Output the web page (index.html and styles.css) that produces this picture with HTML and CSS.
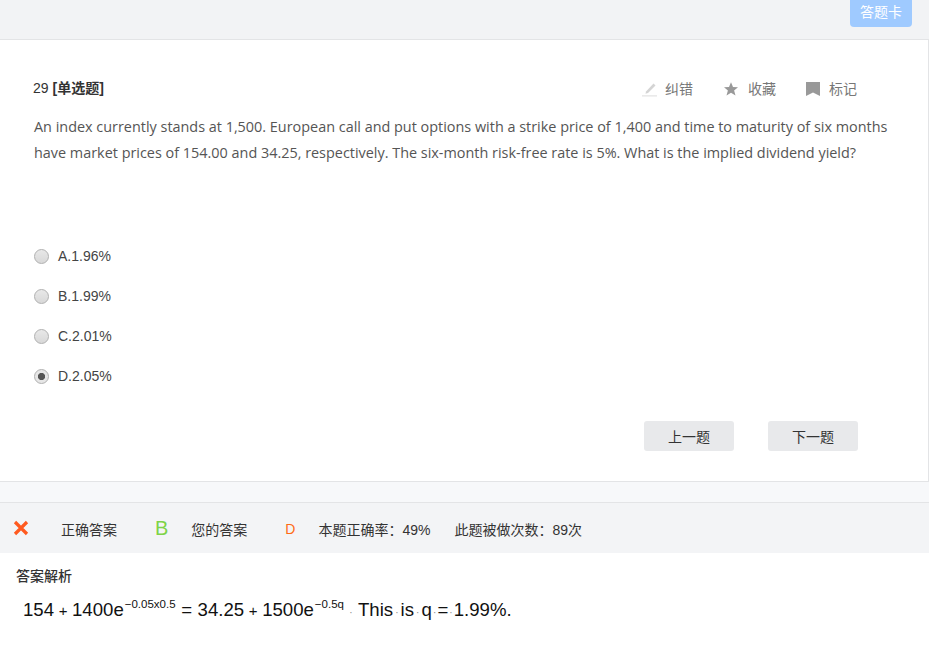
FILE: index.html
```html
<!DOCTYPE html>
<html lang="zh">
<head>
<meta charset="utf-8">
<title>答题</title>
<link rel="stylesheet" href="styles.css">
</head>
<body>
<div class="page">
  <header class="topbar">
    <button class="card-btn">答题卡</button>
  </header>
  <main class="question">
    <div class="q-head">
      <div class="q-title">29 <b>[单选题]</b></div>
      <div class="q-tools">
        <span class="tool">
          <svg class="ico" width="16" height="16" viewBox="0 0 16 16"><path d="M4 10.5 11.5 2.5 13.5 4.5 6 12 3.5 12.8Z" fill="#d4d4d4"/><rect x="0" y="14.4" width="15" height="1" fill="#dcdcdc"/></svg>
          纠错
        </span>
        <span class="tool tool-star">
          <svg class="ico" width="16" height="16" viewBox="0 0 16 16"><path d="M8 1.2 10 6 15 6.2 11.1 9.4 12.5 14.5 8 11.7 3.5 14.5 4.9 9.4 1 6.2 6 6Z" fill="#999"/></svg>
          收藏
        </span>
        <span class="tool tool-flag">
          <svg class="ico" width="16" height="16" viewBox="0 0 16 16"><path d="M1 1H15V15L8 11.5 1 15Z" fill="#999"/></svg>
          标记
        </span>
      </div>
    </div>
    <p class="q-text">An index currently stands at 1,500. European call and put options with a strike price of 1,400 and time to maturity of six months have market prices of 154.00 and 34.25, respectively. The six-month risk-free rate is 5%. What is the implied dividend yield?</p>
    <ul class="options">
      <li class="option"><input class="radio" type="radio" name="q"><span>A.1.96%</span></li>
      <li class="option"><input class="radio" type="radio" name="q"><span>B.1.99%</span></li>
      <li class="option"><input class="radio" type="radio" name="q"><span>C.2.01%</span></li>
      <li class="option"><input class="radio" type="radio" name="q" checked><span>D.2.05%</span></li>
    </ul>
    <div class="nav">
      <button class="nav-btn">上一题</button>
      <button class="nav-btn">下一题</button>
    </div>
  </main>
  <section class="answer">
    <div class="a-bar">
      <svg class="a-x" width="16" height="16" viewBox="0 0 16 16"><path d="M2 2 14 14M14 2 2 14" stroke="#ff5a1f" stroke-width="3.2" fill="none"/></svg>
      <span class="a-correct-label">正确答案</span>
      <span class="a-correct">B</span>
      <span class="a-yours-label">您的答案</span>
      <span class="a-yours">D</span>
      <span class="a-rate">本题正确率：49%</span>
      <span class="a-count">此题被做次数：89次</span>
    </div>
    <div class="a-body">
      <h4 class="a-title">答案解析</h4>
      <p class="formula">154<span class="op">+</span>1400e<sup>−0.05x0.5</sup><span class="eq">=</span>34.25<span class="op">+</span>1500e<sup>−0.5q</sup><span class="dot dot-lead">·</span>This<span class="dot">·</span>is<span class="dot">·</span>q<span class="dot dot-tight">·</span>=<span class="dot dot-tight">·</span>1.99%.</p>
    </div>
  </section>
</div>
</body>
</html>
```
FILE: styles.css
```css
* { box-sizing: border-box; }
html, body { margin: 0; padding: 0; height: 100%; overflow: hidden; background: #fff; }
body {
  font-family: "Liberation Sans", "Noto Sans CJK SC", sans-serif;
  color: #333;
  font-size: 14px;
}
.page { width: 929px; height: 653px; display: flex; flex-direction: column; background: #f7f8fa; }
.topbar {
  height: 40px;
  flex: none;
  background: #f2f3f5;
  border-bottom: 1px solid #e3e4e6;
  display: flex;
  justify-content: flex-end;
  align-items: flex-start;
  padding-right: 17px;
}
.card-btn {
  width: 62px;
  height: 27px;
  margin: 0;
  padding: 0 0 5px;
  border: 0;
  border-radius: 0 0 4px 4px;
  background: #9fcaff;
  color: #fff;
  font: inherit;
  font-size: 14px;
}
.question {
  height: 442px;
  flex: none;
  background: #fff;
  border-right: 1px solid #e3e4e6;
  border-bottom: 1px solid #e3e4e6;
  padding: 39px 70px 0 33px;
}
.q-head { display: flex; justify-content: space-between; align-items: flex-start; height: 19px; }
.q-title { color: #333; font-size: 14px; line-height: 18px; }
.q-title b { font-weight: bold; }
.q-tools { display: flex; gap: 29px; margin-right: 1px; color: #777; line-height: 20px; }
.tool { display: flex; align-items: center; gap: 7px; }
.tool-star { gap: 9px; margin-left: 1px; }
.tool-flag { gap: 8px; }
.ico { display: block; }
.q-text {
  margin: 16px -36px 0 1px;
  font-family: "Open Sans", "Noto Sans CJK SC", sans-serif;
  font-size: 14.42px;
  line-height: 26px;
  color: #555;
}
.options { list-style: none; margin: 70px 0 0; padding: 0 0 0 1px; }
.option { display: flex; align-items: center; height: 40px; gap: 9px; color: #444; }
.radio {
  appearance: none;
  -webkit-appearance: none;
  width: 15px;
  height: 15px;
  margin: 1px 0 0;
  flex: none;
  border-radius: 50%;
  border: 1px solid #b0b0b0;
  background: linear-gradient(#e8e8e8, #d8d8d8);
}
.radio:checked { background: radial-gradient(circle, #555 0, #555 3.2px, #e6e6e6 4px); }
.nav { display: flex; justify-content: flex-end; gap: 34px; margin-top: 25px; }
.nav-btn {
  width: 90px;
  height: 30px;
  margin: 0;
  padding: 0;
  border: 0;
  border-radius: 3px;
  background: #e8e9eb;
  color: #333;
  font: inherit;
}
.answer { margin-top: 20px; flex: 1; background: #fff; }
.a-bar {
  height: 51px;
  background: #f3f4f6;
  border-top: 1px solid #e3e4e6;
  display: flex;
  align-items: center;
  font-size: 14px;
  color: #333;
  padding-top: 1px;
}
.a-x { margin-left: 13px; margin-top: -1px; flex: none; }
.a-correct-label { margin-left: 32px; }
.a-correct { margin-left: 38px; margin-top: 0; font-size: 20px; color: #7ed348; }
.a-yours-label { margin-left: 23px; }
.a-yours { margin-left: 38px; color: #ff6a13; font-size: 14px; }
.a-rate { margin-left: 23px; }
.a-count { margin-left: 24px; }
.a-body { padding: 14px 0 0 16px; }
.a-title { margin: 0; font-size: 14px; line-height: 18px; font-weight: 500; color: #333; }
.formula {
  margin: 11px 0 0 7px;
  font-size: 18.6px;
  line-height: 28px;
  color: #111;
  white-space: nowrap;
}
.formula sup { font-size: 11.5px; line-height: 0; vertical-align: 8px; margin-left: 1px; }
.op { display: inline-block; width: 18px; text-align: center; font-size: 15px; }
.eq { display: inline-block; width: 22px; text-align: center; }
.dot { display: inline-block; width: 7.5px; text-align: center; color: #888; font-size: 10px; }
.dot-lead { width: 14px; }
.dot-tight { width: 5.5px; }
```
